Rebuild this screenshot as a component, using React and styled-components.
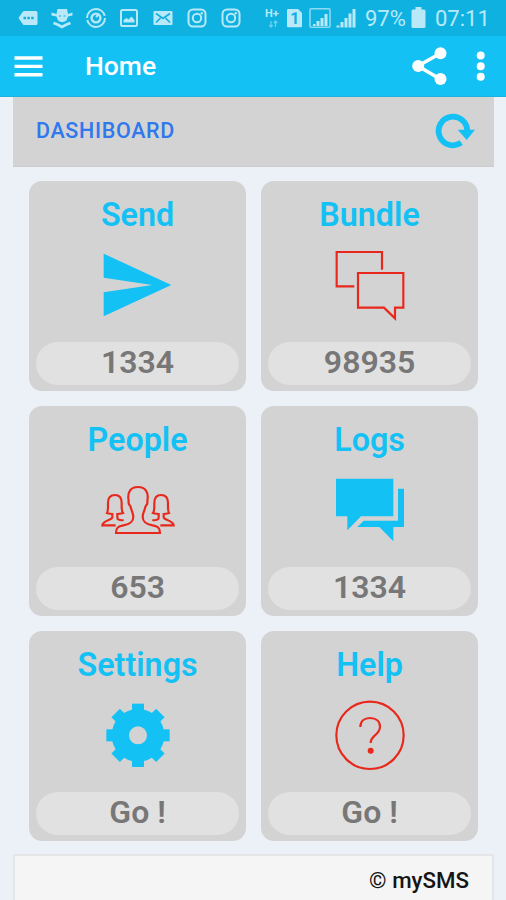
import styled, { createGlobalStyle } from "styled-components"


const GlobalStyle = createGlobalStyle`
    :root {
        --azul: #13c1f5;
        --azul-status: #0fb1e1;
        --cinza: #d3d3d3;
        --vermelho: #e8281c;
    }
    * {
        box-sizing: border-box;
    }
    body {
        margin: 0;
        background-color: #ecf0f7;
        font-family: Roboto, "Liberation Sans", sans-serif;
    }
    svg {
        display: block;
        flex-shrink: 0;
    }
`

const Screen = styled.div`
    display: flex;
    flex-direction: column;
    width: 506px;
    height: 900px;
    overflow: hidden;
`

const StatusBar = styled.div`
    display: flex;
    justify-content: space-between;
    align-items: center;
    height: 36px;
    padding: 0 17px 0 16px;
    background-color: var(--azul-status);
    color: #b9e9f8;
`

const Notifications = styled.div`
    display: flex;
    gap: 9.75px;
`

const System = styled.div`
    display: flex;
    align-items: center;
    font-size: 22px;
    line-height: 36px;
`

const Battery = styled.span`
    width: 41px;
    margin: 1px 5px 0 8px;
    white-space: nowrap;
`

const Clock = styled.span`
    width: 54px;
    margin: 1px 0 0 9px;
    white-space: nowrap;
`

const AppBar = styled.header`
    display: flex;
    align-items: center;
    height: 61px;
    padding: 0 20px 0 14px;
    background-color: var(--azul);
    border-bottom: 1px solid #1cb2e0;
    color: #ffffff;
`

const AppTitle = styled.h1`
    flex: 1;
    margin: 0 0 0 42px;
    font-size: 26.5px;
    font-weight: 500;
    line-height: 60px;
`

const Page = styled.main`
    display: flex;
    flex-direction: column;
    flex: 1;
    padding: 0 12px 0 13px;
`

const Toolbar = styled.div`
    display: flex;
    align-items: center;
    justify-content: space-between;
    height: 70px;
    padding: 0 19px 2px 23px;
    background-color: var(--cinza);
    border-bottom: 1px solid #cccccc;
`

const PageName = styled.h2`
    margin: 0;
    color: #2f78ee;
    font-size: 21.5px;
    font-weight: 500;
    letter-spacing: 0.65px;
`

const Grid = styled.div`
    display: grid;
    grid-template-columns: 217.5px 217.5px;
    grid-auto-rows: 210px;
    gap: 15px 14.5px;
    padding: 14px 15.8px 13px;
`

const Card = styled.div`
    display: flex;
    flex-direction: column;
    align-items: center;
    padding: 15px 7px 0;
    border-radius: 13px;
    background-color: var(--cinza);
    svg {
        margin: 11px 0 17px 1px;
    }
`

const CardTitle = styled.h3`
    margin: 0;
    color: var(--azul);
    font-size: 32.3px;
    font-weight: 600;
    line-height: 38px;
`

const Pill = styled.div`
    width: 100%;
    height: 42.5px;
    border-radius: 22px;
    background-color: #e1e1e1;
    color: #777777;
    font-size: 32px;
    font-weight: 600;
    line-height: 40.5px;
    text-align: center;
`

const Footer = styled.footer`
    flex: 1;
    padding: 0 23px;
    background-color: #f5f5f5;
    border: 2px solid #e3e5e7;
    border-bottom: none;
    color: #151515;
    font-size: 22.3px;
    font-weight: 500;
    line-height: 49px;
    text-align: right;
    span {
        font-weight: 400;
    }
`

const Notice = ({ children }) => (
    <svg width="24" height="24" viewBox="-12 -12 24 24" fill="none" stroke="currentColor" strokeWidth="2">
        {children}
    </svg>
)

const Instagram = () => (
    <Notice>
        <rect x="-8.5" y="-8.5" width="17" height="17" rx="4.5" />
        <circle r="4.2" />
        <circle cx="4.8" cy="-4.8" r="1.2" fill="currentColor" stroke="none" />
    </Notice>
)

const CardIcon = ({ x, line, children }) => (
    <svg
        width="80"
        height="80"
        viewBox={`${x} 210 240 240`}
        fill={line ? "none" : "var(--azul)"}
        stroke={line ? "var(--vermelho)" : "none"}
        strokeWidth="6.5"
    >
        {children}
    </svg>
)

const teeth = [0, 45, 90, 135, 180, 225, 270, 315]

const cards = [
    {
        title: "Send",
        value: "1334",
        icon: (
            <CardIcon x={233}>
                <path d="M250 236L453 330L250 424V352L396 330L250 308Z" />
            </CardIcon>
        ),
    },
    {
        title: "Bundle",
        value: "98935",
        icon: (
            <CardIcon x={224} line>
                <path d="M297 334H244V231H380V284" />
                <path d="M308 294H444V398H419V430L386 398H308Z" />
            </CardIcon>
        ),
    },
    {
        title: "People",
        value: "653",
        icon: (
            <CardIcon x={233} line>
                <path d="M287 399C287 383 294 379 309 376C329 372 339 366 339 350C339 340 333 331 330 318C325 314 324 307 325 302C320 277 331 261 353 261C375 261 386 277 381 302C382 307 381 314 376 318C373 331 367 340 367 350C367 366 377 372 397 376C412 379 419 383 419 399Z" />
                <path d="M310 360C299 362 291 359 291 353V342C297 341 302 341 308 339C303 333 304 322 304 309C304 294 297 285 284 285C270 285 263 294 263 309C263 322 264 333 260 339C265 341 270 341 276 342V353C274 360 247 361 246 376H286" />
                <path d="M396 360C407 362 415 359 415 353V342C409 341 404 341 398 339C403 333 402 322 402 309C402 294 409 285 422 285C436 285 443 294 443 309C443 322 442 333 446 339C441 341 436 341 430 342V353C432 360 459 361 460 376H420" />
            </CardIcon>
        ),
    },
    {
        title: "Logs",
        value: "1334",
        icon: (
            <CardIcon x={224}>
                <path d="M242 236H414V349H317L276 391V349H242Z" />
                <path d="M428 266H446V381H414V424L372 381H306L325 362H428Z" />
            </CardIcon>
        ),
    },
    {
        title: "Settings",
        value: "Go !",
        icon: (
            <CardIcon x={233}>
                <circle cx="353" cy="331" r="53" fill="none" stroke="var(--azul)" strokeWidth="52" />
                {teeth.map((angle) => (
                    <rect key={angle} x="335" y="236" width="36" height="32" transform={`rotate(${angle} 353 331)`} />
                ))}
            </CardIcon>
        ),
    },
    {
        title: "Help",
        value: "Go !",
        icon: (
            <CardIcon x={224} line>
                <circle cx="344" cy="331" r="101" />
                <path d="M315 306C315 288 327 279 344 279C362 279 374 289 374 305C374 318 366 325 358 332C350 339 346 343 346 354" />
                <circle cx="346" cy="377" r="9" fill="var(--vermelho)" stroke="none" />
            </CardIcon>
        ),
    },
]


export default function App() {
    return (
        <>
            <GlobalStyle />
            <Screen>
                <StatusBar>
                    <Notifications>
                        <Notice>
                            <path d="M-9.5 0L-5 -6.5Q-4.5 -7 -3.5 -7H8Q9.5 -7 9.5 -5.5V5.5Q9.5 7 8 7H-3.5Q-4.5 7 -5 6.5Z" fill="currentColor" stroke="none" />
                            <path d="M-4.5 0H-2M-.7 0H1.8M3.2 0H5.7" stroke="var(--azul-status)" strokeWidth="2.6" />
                        </Notice>
                        <Notice>
                            <path d="M-4.5 -9H5L6 -4L10.5 -5.5V-2.5L6 -1.5L4.5 2.5Q0 6 -4 2.5L-5.5 -1.5L-10.5 -2.5V-5.5L-5.5 -4Z" fill="currentColor" stroke="none" />
                            <path d="M-8.5 5L-4.5 6.5L0 9L4.5 6.5L8.5 5" strokeWidth="2.6" />
                            <path d="M-3 -2H-1M1.5 -2H3.5" stroke="var(--azul-status)" strokeWidth="1.2" />
                        </Notice>
                        <Notice>
                            <circle r="9" strokeDasharray="26 2 26 2.5" />
                            <circle r="4.4" strokeWidth="2.4" />
                            <path d="M0 -1L3 -4" />
                        </Notice>
                        <Notice>
                            <rect x="-8" y="-8" width="16" height="16" rx="1.5" />
                            <path d="M-5.5 4.5V2L-2.5 0L-.5 1.5L2.5 -1.5L5.5 2V4.5Z" fill="currentColor" stroke="none" />
                        </Notice>
                        <Notice>
                            <rect x="-9.5" y="-7" width="19" height="14" rx="1" fill="currentColor" stroke="none" />
                            <path d="M-7 -4.5L0 .5L7 -4.5M-7 4.5L-2.5 0M7 4.5L2.5 0" stroke="var(--azul-status)" strokeWidth="1.7" />
                        </Notice>
                        <Instagram />
                        <Instagram />
                    </Notifications>
                    <System>
                        <svg width="95" height="24" viewBox="262 6 95 24" fill="currentColor">
                            <text x="265" y="17.3" fontSize="11" fontWeight="700">H+</text>
                            <path d="M271 21V27M269.3 25L271 27L272.7 25M275.5 27V21M273.8 23L275.5 21L277.2 23" fill="none" stroke="#70d0ef" strokeWidth="1.2" />
                            <path d="M288 9H298L302 13V26Q302 27.3 300.5 27.3H288Q287 27.3 287 26V10Q287 9 288 9Z" />
                            <text x="290.2" y="24" fontSize="16" fontWeight="700" fill="var(--azul-status)">1</text>
                            <rect x="310" y="8.8" width="20" height="18.5" rx="1" fill="none" stroke="#8ddbf3" strokeWidth="1.5" />
                            <path d="M313 26V24H315.5V26ZM316.5 26V21H319.5V26ZM320.5 26V18H323.5V26ZM324.5 26V14H327.5V26Z" />
                            <path d="M336.5 27.5V25.5H339.5V27.5ZM340.5 27.5V22H343.5V27.5ZM344.5 27.5V18H347.5V27.5ZM348.5 27.5V13.5H351.5V27.5ZM352.5 27.5V9H355.5V27.5Z" />
                        </svg>
                        <Battery>97%</Battery>
                        <svg width="15" height="24" viewBox="0 0 15 24" fill="currentColor">
                            <path d="M4.5 1H10.5V3.5H13Q14.5 3.5 14.5 5V20.5Q14.5 22 13 22H2Q.5 22 .5 20.5V5Q.5 3.5 2 3.5H4.5Z" />
                        </svg>
                        <Clock>07:11</Clock>
                    </System>
                </StatusBar>
                <AppBar>
                    <svg width="29" height="24" viewBox="0 0 29 24" fill="none" stroke="currentColor" strokeWidth="3.4">
                        <path d="M.5 4H28.5M.5 12.4H28.5M.5 20.8H28.5" />
                    </svg>
                    <AppTitle>Home</AppTitle>
                    <svg width="75" height="40" viewBox="411 46.5 75 40" fill="currentColor">
                        <path d="M440.5 53.7L418 66.5L440.5 79.7" fill="none" stroke="currentColor" strokeWidth="3.6" />
                        <circle cx="440.5" cy="53.7" r="6" />
                        <circle cx="418.2" cy="66.5" r="6" />
                        <circle cx="440.5" cy="79.5" r="6" />
                        <circle cx="480.7" cy="56" r="4" />
                        <circle cx="480.7" cy="66.7" r="4" />
                        <circle cx="480.7" cy="77.3" r="4" />
                    </svg>
                </AppBar>
                <Page>
                    <Toolbar>
                        <PageName>DASHIBOARD</PageName>
                        <svg width="40" height="36" viewBox="-18 -18 40 36" fill="none" stroke="var(--azul)" strokeWidth="5.8">
                            <path d="M8.2 11.7A14.3 14.3 0 1 1 14.2 1" />
                            <path d="M4.7 -1.2H22L13.7 9Z" fill="var(--azul)" stroke="none" />
                        </svg>
                    </Toolbar>
                    <Grid>
                        {cards.map((card) => (
                            <Card key={card.title}>
                                <CardTitle>{card.title}</CardTitle>
                                {card.icon}
                                <Pill>{card.value}</Pill>
                            </Card>
                        ))}
                    </Grid>
                    <Footer><span>©</span> mySMS</Footer>
                </Page>
            </Screen>
        </>
    )
}
